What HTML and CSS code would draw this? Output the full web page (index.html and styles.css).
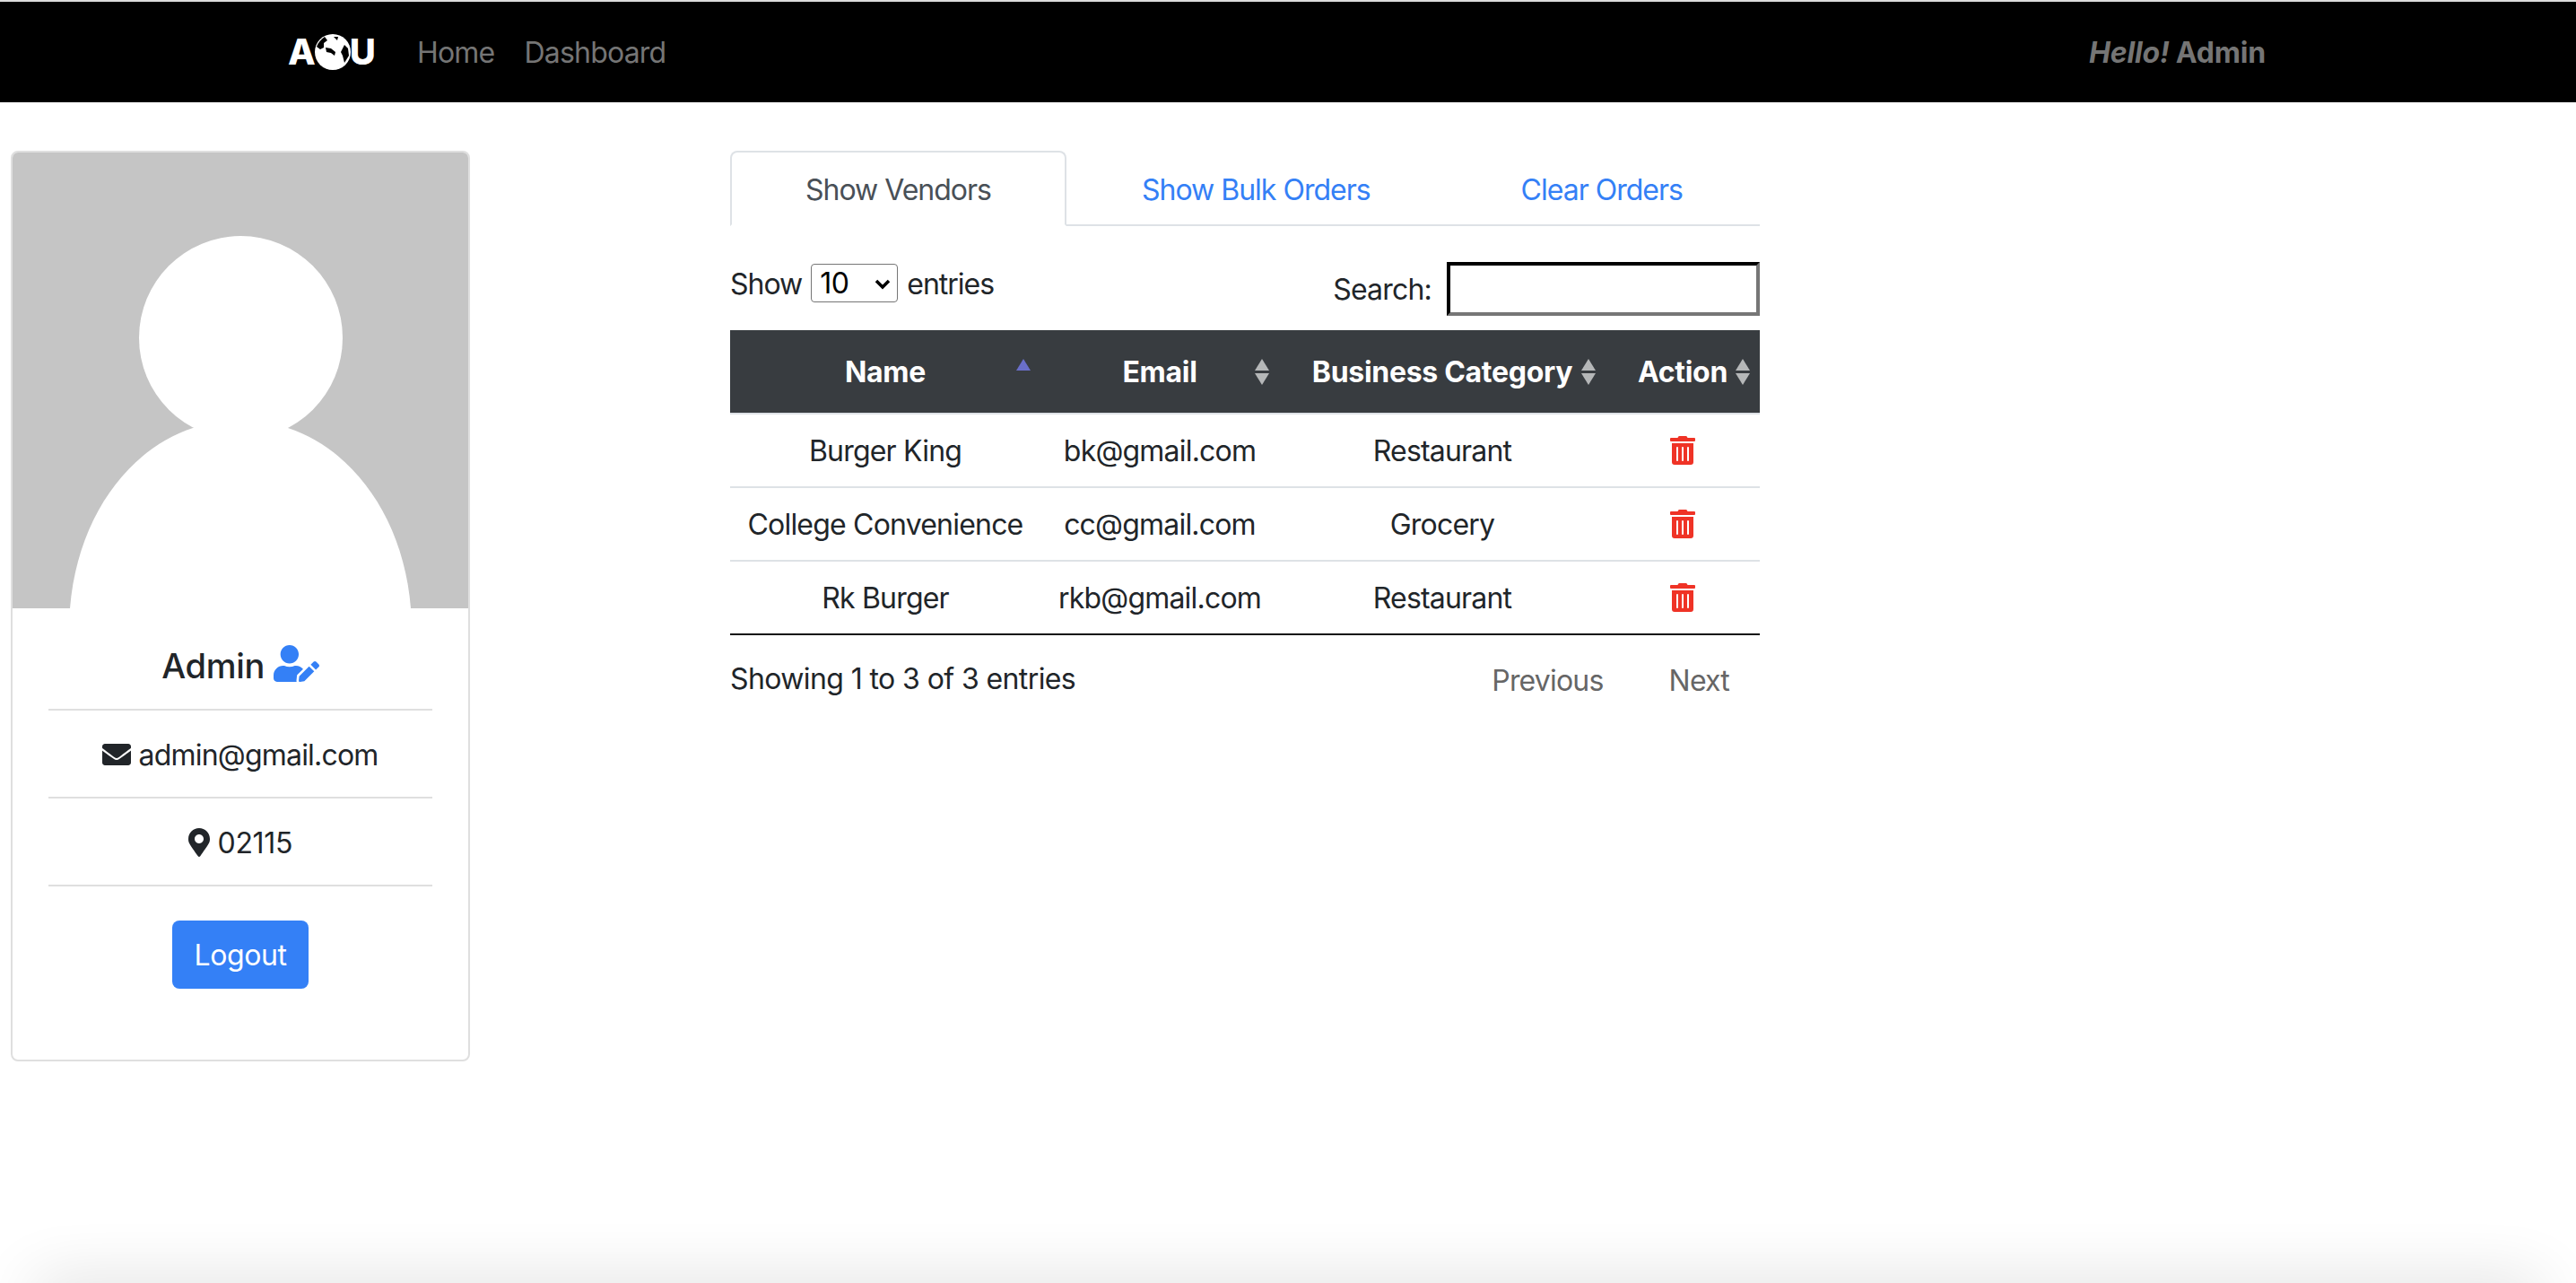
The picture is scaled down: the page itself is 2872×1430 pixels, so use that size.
FILE: index.html
```html
<!DOCTYPE html>
<html>
<head>
<meta name="viewport" content="width=device-width, initial-scale=1" charset="utf-8">
<title>Admin</title>
<link rel="stylesheet" href="styles.css">
</head>
<body>

<div class="page">
  <nav class="topbar">
    <a class="brand" href="#">
      <span>A</span>
      <svg class="globe" viewBox="0 0 40 40">
        <circle cx="20" cy="20" r="20" fill="#fff"/>
        <path d="M2 14C4 9 7 6 11 3L14 7 10 10 10 15 6 17z" fill="#000"/>
        <path d="M12 15L18 16 23 20 22 24 18 21 13 20z" fill="#000"/>
        <path d="M33 12L37 16 38 24 33 32 31 24 29 20z" fill="#000"/>
        <path d="M21 3L26 3 25 7z" fill="#000"/>
      </svg>
      <span>U</span>
    </a>
    <a class="nav-link" href="#">Home</a>
    <a class="nav-link" href="#">Dashboard</a>
    <span class="hello"><em>Hello!</em> Admin</span>
  </nav>

  <main class="content">
    <aside class="profile">
      <svg class="avatar" viewBox="0 0 508 508">
        <rect width="508" height="508" fill="#c5c5c5"/>
        <circle cx="254.500" cy="206.500" r="113.500" fill="#fff"/>
        <path d="M64 508C72 408 128 331 201 307L307 307C380 331 436 408 444 508z" fill="#fff"/>
      </svg>
      <div class="profile-body">
        <h4 class="profile-name">Admin
          <svg class="icon-edit" viewBox="0 0 640 512"><path d="M224 256c70.7 0 128-57.3 128-128S294.7 0 224 0 96 57.3 96 128s57.3 128 128 128zm89.6 32h-16.7c-22.2 10.2-46.9 16-72.9 16s-50.6-5.8-72.9-16h-16.7C60.2 288 0 348.2 0 422.4V464c0 26.5 21.5 48 48 48h274.9c-2.4-6.8-3.4-14-2.6-21.3l6.8-60.9 1.2-11.1 7.9-7.9 77.3-77.3c-24.5-27.7-60-45.5-99.9-45.5zm45.3 145.3l-6.8 61c-1.1 10.2 7.5 18.8 17.6 17.6l60.9-6.8 137.9-137.9-71.7-71.7-137.9 137.8zM633 268.9L595.1 231c-9.3-9.3-24.5-9.3-33.8 0l-37.8 37.8-4.1 4.1 71.8 71.7 41.8-41.8c9.3-9.4 9.3-24.5 0-33.9z"/></svg>
        </h4>
        <div class="profile-line">
          <svg class="icon-mail" viewBox="0 0 512 512"><path d="M502.3 190.8c3.9-3.1 9.7-.2 9.7 4.7V400c0 26.5-21.5 48-48 48H48c-26.5 0-48-21.5-48-48V195.6c0-5 5.7-7.8 9.7-4.7 22.4 17.4 52.1 39.5 154.1 113.6 21.1 15.4 56.7 47.8 92.2 47.6 35.7.3 72-32.8 92.3-47.6 102-74.1 131.6-96.3 154-113.7zM256 320c23.2.4 56.6-29.2 73.4-41.4 132.7-96.3 142.8-104.7 173.4-128.7 5.8-4.5 9.2-11.5 9.2-18.9v-19c0-26.5-21.5-48-48-48H48C21.5 64 0 85.5 0 112v19c0 7.4 3.4 14.3 9.2 18.9 30.6 23.9 40.7 32.4 173.4 128.7 16.8 12.2 50.2 41.8 73.4 41.4z"/></svg>
          admin@gmail.com
        </div>
        <div class="profile-line profile-zip">
          <svg class="icon-pin" viewBox="0 0 384 512"><path d="M172.268 501.67C26.97 291.031 0 268.413 0 192 0 85.961 85.961 0 192 0s192 85.961 192 192c0 76.413-26.97 99.031-172.268 309.67-9.535 13.774-29.93 13.773-39.464 0zM192 272c44.183 0 80-35.817 80-80s-35.817-80-80-80-80 35.817-80 80 35.817 80 80 80z"/></svg>
          02115
        </div>
        <div class="logout-row"><a class="btn-logout" href="#">Logout</a></div>
      </div>
    </aside>

    <section class="vendors">
      <ul class="tabs">
        <li class="tab tab-active">Show Vendors</li>
        <li class="tab">Show Bulk Orders</li>
        <li class="tab">Clear Orders</li>
      </ul>

      <div class="table-tools">
        <label class="length">Show
          <select><option>10</option></select>
          entries</label>
        <label class="search">Search: <input type="text"></label>
      </div>

      <table class="table">
        <thead>
          <tr>
            <th class="col-name">Name<span class="sort sort-asc"></span></th>
            <th class="col-email">Email<span class="sort"></span></th>
            <th class="col-cat">Business Category<span class="sort"></span></th>
            <th class="col-action">Action<span class="sort"></span></th>
          </tr>
        </thead>
        <tbody>
          <tr>
            <td>Burger King</td>
            <td>bk@gmail.com</td>
            <td>Restaurant</td>
            <td><svg class="icon-trash" viewBox="0 0 448 512"><path d="M32 464a48 48 0 0 0 48 48h288a48 48 0 0 0 48-48V128H32zm272-256a16 16 0 0 1 32 0v224a16 16 0 0 1-32 0zm-96 0a16 16 0 0 1 32 0v224a16 16 0 0 1-32 0zm-96 0a16 16 0 0 1 32 0v224a16 16 0 0 1-32 0zM432 32H312l-9.4-18.7A24 24 0 0 0 281.1 0H166.8a23.72 23.72 0 0 0-21.4 13.3L136 32H16A16 16 0 0 0 0 48v32a16 16 0 0 0 16 16h416a16 16 0 0 0 16-16V48a16 16 0 0 0-16-16z"/></svg></td>
          </tr>
          <tr>
            <td>College Convenience</td>
            <td>cc@gmail.com</td>
            <td>Grocery</td>
            <td><svg class="icon-trash" viewBox="0 0 448 512"><path d="M32 464a48 48 0 0 0 48 48h288a48 48 0 0 0 48-48V128H32zm272-256a16 16 0 0 1 32 0v224a16 16 0 0 1-32 0zm-96 0a16 16 0 0 1 32 0v224a16 16 0 0 1-32 0zm-96 0a16 16 0 0 1 32 0v224a16 16 0 0 1-32 0zM432 32H312l-9.4-18.7A24 24 0 0 0 281.1 0H166.8a23.72 23.72 0 0 0-21.4 13.3L136 32H16A16 16 0 0 0 0 48v32a16 16 0 0 0 16 16h416a16 16 0 0 0 16-16V48a16 16 0 0 0-16-16z"/></svg></td>
          </tr>
          <tr>
            <td>Rk Burger</td>
            <td>rkb@gmail.com</td>
            <td>Restaurant</td>
            <td><svg class="icon-trash" viewBox="0 0 448 512"><path d="M32 464a48 48 0 0 0 48 48h288a48 48 0 0 0 48-48V128H32zm272-256a16 16 0 0 1 32 0v224a16 16 0 0 1-32 0zm-96 0a16 16 0 0 1 32 0v224a16 16 0 0 1-32 0zm-96 0a16 16 0 0 1 32 0v224a16 16 0 0 1-32 0zM432 32H312l-9.4-18.7A24 24 0 0 0 281.1 0H166.8a23.72 23.72 0 0 0-21.4 13.3L136 32H16A16 16 0 0 0 0 48v32a16 16 0 0 0 16 16h416a16 16 0 0 0 16-16V48a16 16 0 0 0-16-16z"/></svg></td>
          </tr>
        </tbody>
      </table>

      <div class="table-foot">
        <span class="foot-info">Showing 1 to 3 of 3 entries</span>
        <span class="pager"><a href="#">Previous</a><a href="#">Next</a></span>
      </div>
    </section>
  </main>

  <div class="page-edge"></div>
</div>

</body>
</html>
```

FILE: styles.css
```css
* {
  box-sizing: border-box;
}

html, body {
  margin: 0;
  height: 100%;
  overflow: hidden;
}

body {
  background: #fff;
  color: #212529;
  font-family: Inter, "Liberation Sans", sans-serif;
  font-size: 32px;
  letter-spacing: -0.8px;
}

a {
  text-decoration: none;
}

.page {
  display: flex;
  flex-direction: column;
  height: 1430px;
}

/* top bar */
.topbar {
  display: flex;
  align-items: center;
  height: 114px;
  padding: 0 346px 0 321px;
  background: #000;
  border-top: 2px solid #dcdcdc;
  flex: none;
}

.brand {
  display: flex;
  align-items: center;
  width: 93px;
  margin-right: 51px;
  color: #fff;
  font-size: 40px;
  font-weight: 800;
  letter-spacing: 0;
  line-height: 40px;
}

.globe {
  width: 40px;
  height: 40px;
  flex: none;
  margin: 0 -1px;
}

.nav-link {
  margin-right: 33px;
  color: #757575;
}

.hello {
  margin-left: auto;
  color: #757575;
  font-weight: 700;
  letter-spacing: -0.2px;
}

/* page body */
.content {
  flex: 1;
  display: flex;
  align-items: flex-start;
  padding: 54px 0 0 12px;
}

.profile {
  width: 512px;
  height: 1015px;
  flex: none;
  margin-right: 290px;
  border: 2px solid #dfdfdf;
  border-radius: 8px;
  overflow: hidden;
}

.avatar {
  display: block;
  width: 508px;
  height: 508px;
}

.profile-body {
  padding: 0 40px;
  text-align: center;
}

.profile-name {
  margin: 0;
  height: 114px;
  padding-top: 39px;
  border-bottom: 2px solid #dfdfdf;
  font-size: 38px;
  font-weight: 500;
  letter-spacing: -0.3px;
  line-height: 50px;
}

.icon-edit {
  width: 51px;
  height: 41px;
  fill: #3480f6;
  vertical-align: -4px;
}

.profile-line {
  height: 98px;
  padding-top: 26px;
  border-bottom: 2px solid #dfdfdf;
  line-height: 48px;
}

.profile-zip {
  letter-spacing: -0.3px;
}

.icon-mail {
  width: 32px;
  height: 32px;
  fill: #212529;
  vertical-align: -4px;
}

.icon-pin {
  width: 24px;
  height: 32px;
  fill: #212529;
  vertical-align: -4px;
}

.logout-row {
  padding-top: 38px;
}

.btn-logout {
  display: inline-block;
  width: 152px;
  height: 76px;
  background: #3480f6;
  border-radius: 8px;
  color: #fff;
  letter-spacing: -0.4px;
  line-height: 78px;
}

/* vendors panel */
.vendors {
  width: 1148px;
  flex: none;
}

.tabs {
  display: flex;
  margin: 0;
  padding: 0;
  height: 84px;
  list-style: none;
  border-bottom: 2px solid #dee2e6;
}

.tab {
  height: 84px;
  padding: 0 82px;
  border: 2px solid transparent;
  color: #3480f6;
  letter-spacing: -1px;
  line-height: 84px;
  white-space: nowrap;
}

.tab-active {
  background: #fff;
  border-color: #dee2e6 #dee2e6 #fff;
  border-radius: 8px 8px 0 0;
  color: #495057;
}

.table-tools {
  display: flex;
  justify-content: space-between;
  align-items: flex-start;
  height: 116px;
  padding-top: 42px;
  letter-spacing: -1px;
}

.length {
  display: flex;
  align-items: center;
  gap: 10px;
  height: 45px;
}

.length select {
  width: 97px;
  height: 43px;
  margin-bottom: 2px;
  padding-left: 9px;
  appearance: none;
  background: #fff url("data:image/svg+xml,%3Csvg xmlns='http://www.w3.org/2000/svg' viewBox='0 0 18 12'%3E%3Cpath d='M2 2l7 7 7-7' fill='none' stroke='%23000' stroke-width='3.500'/%3E%3C/svg%3E") no-repeat 70px 16px / 18px 12px;
  border: 1px solid #767676;
  border-radius: 4px;
  color: #000;
  font-family: inherit;
  font-size: 32px;
  letter-spacing: -0.6px;
}

.search {
  display: flex;
  align-items: center;
  gap: 17px;
  margin-top: -2px;
  letter-spacing: -0.8px;
}

.search input {
  width: 349px;
  height: 60px;
  border: 4px inset #767676;
  border-color: #1f1f1f #767676 #767676 #1f1f1f;
  background: #fff;
}

.table {
  width: 100%;
  border-collapse: separate;
  border-spacing: 0;
  table-layout: fixed;
  text-align: center;
}

.table th {
  position: relative;
  height: 94px;
  padding: 0;
  background: #383c40;
  border-bottom: 2px solid #dee2e6;
  color: #fff;
  font-weight: 700;
  letter-spacing: -0.3px;
  white-space: nowrap;
}

.col-name {
  width: 346px;
}

.col-email {
  width: 266px;
}

.col-cat {
  width: 364px;
}

.col-action {
  width: 172px;
}

.table td {
  height: 82px;
  padding: 0;
  border-bottom: 2px solid #dee2e6;
}

.table tbody tr:last-child td {
  border-bottom-color: #111;
}

.icon-trash {
  display: block;
  width: 28px;
  height: 32px;
  margin: 0 auto;
  fill: #ef3326;
}

/* sort arrows in the header */
.sort {
  position: absolute;
  top: 32px;
  right: 10px;
  width: 17px;
  height: 29px;
}

.sort::before,
.sort::after {
  content: "";
  position: absolute;
  left: 0;
  border-left: 8.500px solid transparent;
  border-right: 8.500px solid transparent;
}

.sort::before {
  top: 0;
  border-bottom: 13px solid #b5b7b8;
}

.sort::after {
  bottom: 0;
  border-top: 13px solid #b5b7b8;
}

.sort-asc::before {
  border-bottom-color: #6a6fc9;
}

.sort-asc::after {
  display: none;
}

.table-foot {
  display: flex;
  justify-content: space-between;
  padding-top: 29px;
}

.foot-info {
  letter-spacing: -0.6px;
}

.pager {
  padding-top: 2px;
}

.pager a {
  margin-right: 34px;
  margin-left: 73px;
  color: #666;
}

.pager a:first-child {
  margin-right: 0;
}

/* soft shadow of the window edge */
.page-edge {
  flex: none;
  height: 40px;
  margin: 0 40px -40px;
  box-shadow: 0 0 70px rgba(0, 0, 0, 0.16);
}
```
